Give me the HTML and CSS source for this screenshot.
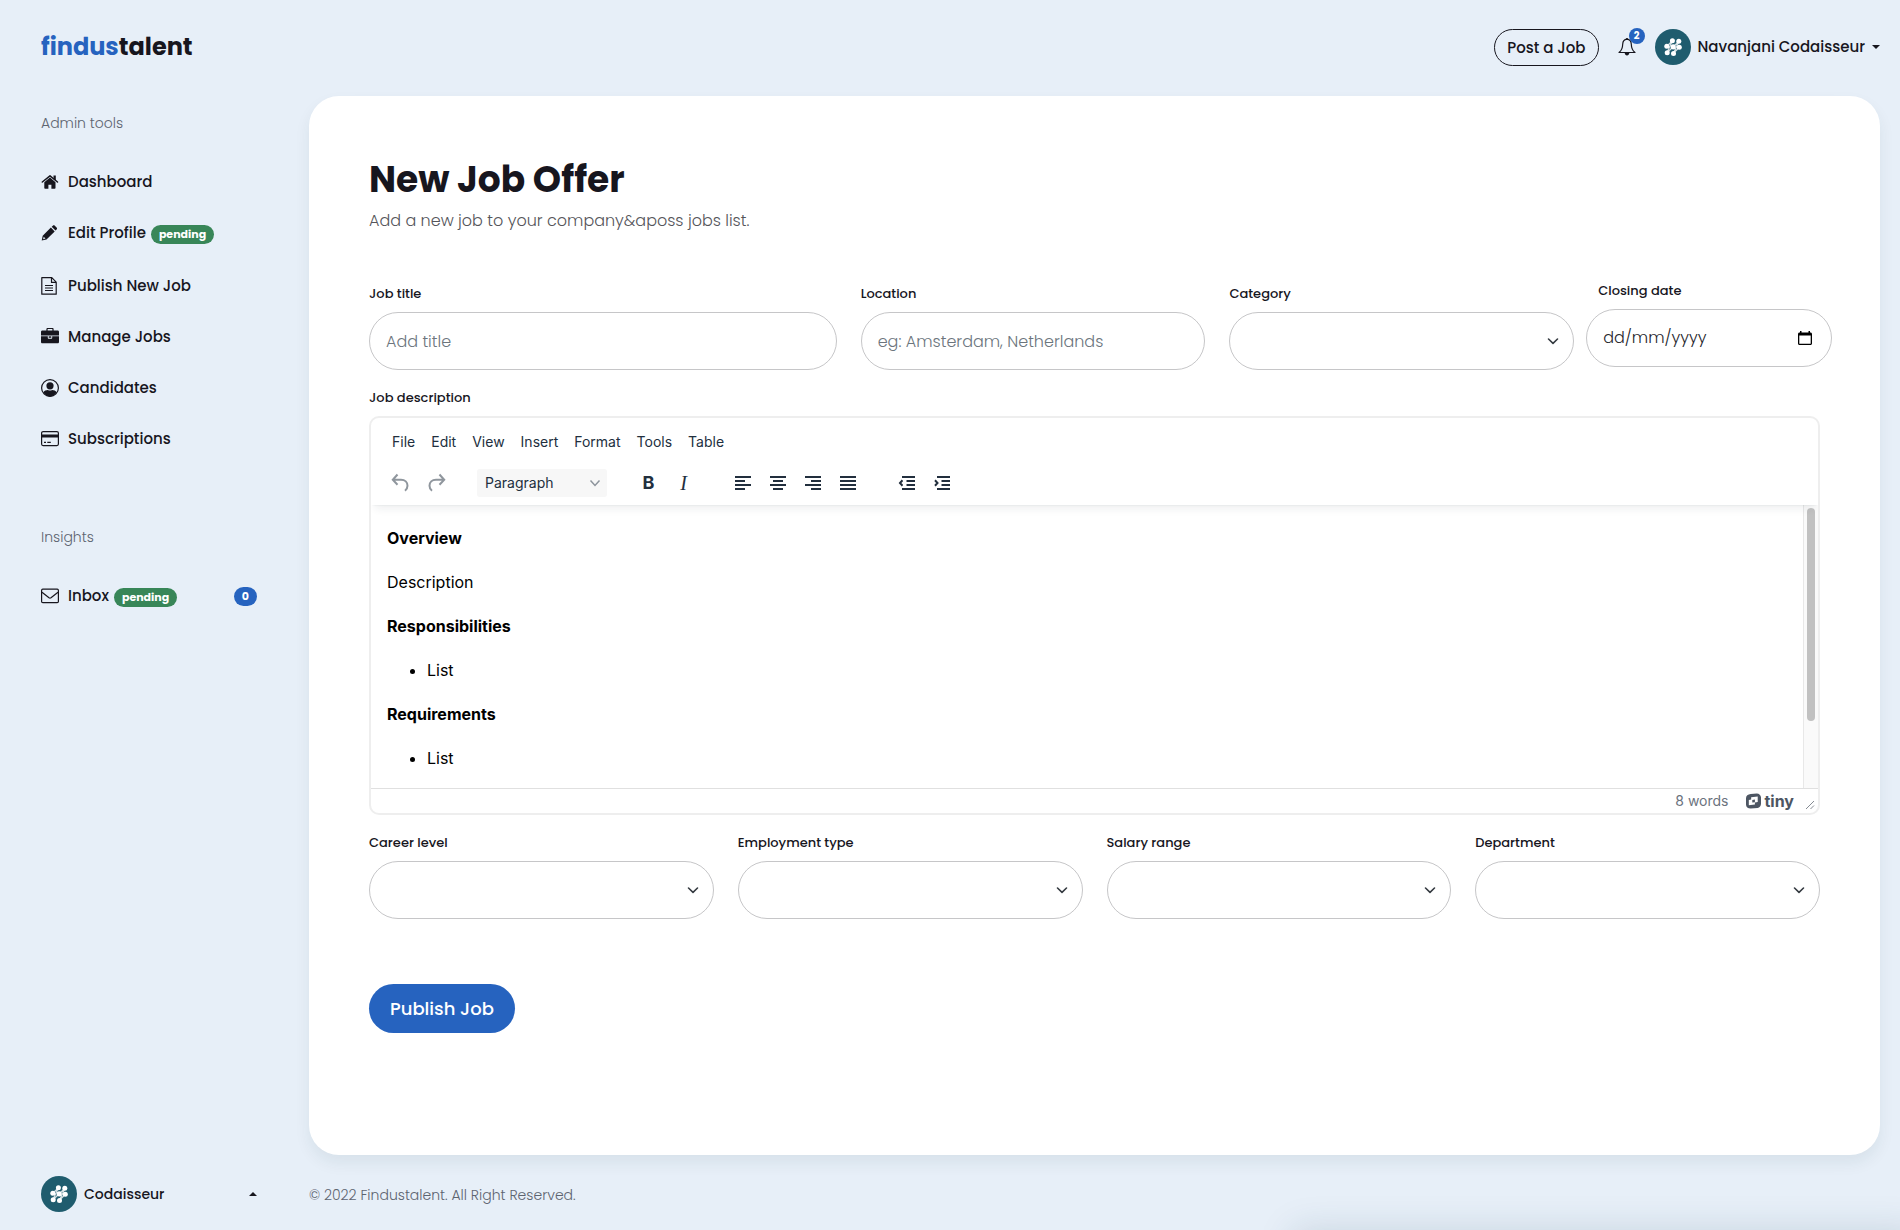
FILE: index.html
```html
<!DOCTYPE html>
<html lang="en-GB">
<head>
<meta charset="utf-8">
<meta name="viewport" content="width=device-width, initial-scale=1">
<title>New Job Offer - findustalent</title>
<link rel="stylesheet" href="styles.css">
</head>
<body>
<svg class="sprite" aria-hidden="true">
  <symbol id="mark" viewBox="0 0 36 36">
    <circle cx="18" cy="18" r="18" fill="#1f5c6e"/>
    <g stroke="#fff" stroke-linecap="round" stroke-width="1.300" fill="none" opacity=".8">
      <path d="M17.400 11.700 12 17.200M24 12.300 12 23.700M24.200 18.200 18.500 24.300M17.400 11.700 12 23.700M24 12.300 18.500 24.300"/>
    </g>
    <g fill="#fff">
      <circle cx="17.400" cy="11.700" r="2.500"/><circle cx="23.800" cy="12.300" r="2.500"/>
      <circle cx="11.800" cy="17.200" r="2.500"/><circle cx="18.200" cy="17.800" r="2.600"/><circle cx="24.300" cy="18.200" r="2.500"/>
      <circle cx="12.200" cy="23.800" r="2.500"/><circle cx="18.500" cy="24.400" r="2.500"/>
    </g>
  </symbol>
</svg>

<aside class="sidebar">
  <a class="logo" href="#"><span class="logo-accent">findus</span>talent</a>
  <nav class="nav">
    <h2 class="nav-title">Admin tools</h2>
    <ul class="nav-list">
      <li><a class="nav-link" href="#">
        <svg class="nav-icon" viewBox="0 0 18 18"><path fill="currentColor" d="M9 4.600 3.300 9.300V15c0 .5.3.8.8.8h3.300v-4h3v4h3.300c.5 0 .8-.3.8-.8V9.300z"/><path fill="none" stroke="currentColor" stroke-width="1.500" stroke-linecap="round" stroke-linejoin="round" d="M1.300 9 9 2.800 16.500 9"/><path fill="currentColor" d="M12.500 2.500h2.300v5l-2.300-2z"/></svg>
        <span>Dashboard</span></a></li>
      <li><a class="nav-link nav-link-tagged" href="#">
        <svg class="nav-icon" viewBox="0 0 18 18"><path fill="currentColor" d="M11.800 1.700c.6-.6 1.400-.6 2 0l1.800 1.800c.6.6.6 1.400 0 2l-1.100 1.100-3.800-3.800zM9.900 3.600l3.800 3.800-8.200 8.200-4.800 1 1-4.800zM2.700 12.700l-.6 2.500 2.400-.6z" fill-rule="evenodd"/></svg>
        <span>Edit Profile</span><span class="tag">pending</span></a></li>
      <li><a class="nav-link" href="#">
        <svg class="nav-icon" viewBox="0 0 18 18"><g fill="none" stroke="currentColor" stroke-width="1.200" stroke-linejoin="round"><path d="M.8.700h10l4.400 4.400v12.100H.8zM10.500.700v4.700h4.700"/><path d="M4 8.500h8M4 11h8M4 13.500h8"/></g></svg>
        <span>Publish New Job</span></a></li>
      <li><a class="nav-link" href="#">
        <svg class="nav-icon" viewBox="0 0 18 18"><path fill="none" stroke="currentColor" stroke-width="1.200" d="M6 3V1.200c0-.5.3-.8.8-.8h4.400c.5 0 .8.300.8.8V3"/><path fill="currentColor" d="M1.300 2.600h15.400c.7 0 1.300.6 1.300 1.300v3.600H0V3.900c0-.7.6-1.300 1.300-1.300zM0 8.300h6.800V10c0 .4.300.7.7.7h3c.4 0 .7-.3.700-.7V8.300H18V14c0 .7-.6 1.300-1.300 1.300H1.300C.6 15.300 0 14.700 0 14z"/><path fill="currentColor" d="M7.700 8.300h2.600v1.500H7.700z"/></svg>
        <span>Manage Jobs</span></a></li>
      <li><a class="nav-link" href="#">
        <svg class="nav-icon" viewBox="0 0 18 18"><circle cx="9" cy="9" r="8.400" fill="none" stroke="currentColor" stroke-width="1.200"/><circle cx="9" cy="6.800" r="3.600" fill="currentColor"/><path fill="currentColor" d="M2.300 13.500c1-1.600 2.800-2.400 4.600-2.400.7.400 1.400.5 2.100.5s1.400-.1 2.100-.5c1.800 0 3.600.8 4.600 2.400C14.200 15.900 11.800 17.400 9 17.400s-5.200-1.500-6.700-3.900z"/></svg>
        <span>Candidates</span></a></li>
      <li><a class="nav-link" href="#">
        <svg class="nav-icon" viewBox="0 0 18 18"><rect x=".6" y="1.600" width="16.800" height="14" rx="1.500" fill="none" stroke="currentColor" stroke-width="1.200"/><path fill="currentColor" d="M.6 4.600h16.800v3H.6zM3 11.800h2v1.300H3zM6.300 11.800h3.500v1.300H6.300z"/></svg>
        <span>Subscriptions</span></a></li>
    </ul>
    <h2 class="nav-title nav-title-second">Insights</h2>
    <ul class="nav-list">
      <li><a class="nav-link nav-link-tagged" href="#">
        <svg class="nav-icon" viewBox="0 0 18 18"><rect x=".6" y="2.200" width="16.800" height="13.500" rx="1.200" fill="none" stroke="currentColor" stroke-width="1.200"/><path fill="none" stroke="currentColor" stroke-width="1.200" d="M1 5.200 8 10.700c.7.500 1.300.5 2 0l7-5.500"/></svg>
        <span>Inbox</span><span class="tag">pending</span><span class="tag tag-count">0</span></a></li>
    </ul>
  </nav>
  <button class="company" type="button">
    <svg class="avatar" aria-hidden="true"><use href="#mark"/></svg>
    <span>Codaisseur</span>
    <span class="caret caret-up"></span>
  </button>
</aside>

<div class="page">
  <header class="topbar">
    <a class="post-job" href="#">Post a Job</a>
    <button class="bell" type="button" aria-label="Notifications">
      <svg class="bell-icon" viewBox="0 0 18 18"><path fill="none" stroke="currentColor" stroke-width="1.200" stroke-linejoin="round" d="M9 1.200c-2.800.3-4.200 2.400-4.300 5-.1 3.600-1 6.200-3.700 8.300h16c-2.700-2.100-3.600-4.700-3.700-8.300-.1-2.600-1.500-4.700-4.300-5z"/><path fill="currentColor" d="M9 0c.6 0 1 .5 1 1.200H8C8 .5 8.400 0 9 0zM6.700 15h4.600c-.2 1.500-1 2.500-2.300 2.500S6.900 16.500 6.700 15z"/></svg>
      <span class="bell-count">2</span>
    </button>
    <button class="user" type="button">
      <svg class="avatar" aria-hidden="true"><use href="#mark"/></svg>
      <span>Navanjani Codaisseur</span>
      <span class="caret"></span>
    </button>
  </header>

  <main class="card">
    <h1 class="title">New Job Offer</h1>
    <p class="lead">Add a new job to your company&amp;aposs jobs list.</p>
    <form class="form">
      <div class="row row-top">
        <div class="field field-wide"><label for="title">Job title</label><input class="control" id="title" type="text" placeholder="Add title"></div>
        <div class="field"><label for="location">Location</label><input class="control" id="location" type="text" placeholder="eg: Amsterdam, Netherlands"></div>
        <div class="field"><label for="category">Category</label><select class="control select" id="category"><option></option></select></div>
        <div class="field field-date">
          <label for="closing">Closing date</label>
          <div class="control date">
            <input class="date-input" id="closing" type="text" placeholder="dd/mm/yyyy">
            <button class="date-button" type="button" aria-label="Open calendar"><svg class="date-icon" viewBox="0 0 14 16"><path fill="currentColor" fill-rule="evenodd" d="M2 1h1.500v1.500h7V1H12v1.500h.5c.8 0 1.500.6 1.500 1.500v9.500c0 .8-.7 1.500-1.500 1.500h-11C.7 15 0 14.300 0 13.500V4c0-.9.700-1.500 1.500-1.500H2zM1.300 5.500v8.200h11.400V5.500z"/></svg></button>
          </div>
        </div>
      </div>

      <div class="description">
        <label for="editor-body">Job description</label>
        <div class="editor">
          <div class="editor-head">
            <div class="menubar">
              <button type="button">File</button><button type="button">Edit</button><button type="button">View</button><button type="button">Insert</button><button type="button">Format</button><button type="button">Tools</button><button type="button">Table</button>
            </div>
            <div class="toolbar">
              <div class="group">
                <button class="tool tool-off" type="button" aria-label="Undo"><svg viewBox="0 0 24 24"><path d="M8.500 3.500 3.800 8.800l4.700 4.900M4 8.800h8c4 0 6.500 2.400 6.500 6 0 2-.9 3.800-2.500 5"/></svg></button>
                <button class="tool tool-off" type="button" aria-label="Redo"><svg viewBox="0 0 24 24"><path d="m15.500 3.500 4.700 5.300-4.700 4.900M20 8.800h-8c-4 0-6.500 2.400-6.500 6 0 2 .9 3.800 2.500 5"/></svg></button>
              </div>
              <select class="block-format" aria-label="Block format"><option>Paragraph</option></select>
              <div class="group">
                <button class="tool tool-bold" type="button" aria-label="Bold">B</button>
                <button class="tool tool-italic" type="button" aria-label="Italic">I</button>
              </div>
              <div class="group">
                <button class="tool" type="button" aria-label="Align left"><svg viewBox="0 0 24 24"><path d="M4 6h16M4 10h10M4 14h16M4 18h10"/></svg></button>
                <button class="tool" type="button" aria-label="Align centre"><svg viewBox="0 0 24 24"><path d="M4 6h16M7 10h10M4 14h16M7 18h10"/></svg></button>
                <button class="tool" type="button" aria-label="Align right"><svg viewBox="0 0 24 24"><path d="M4 6h16M10 10h10M4 14h16M10 18h10"/></svg></button>
                <button class="tool" type="button" aria-label="Justify"><svg viewBox="0 0 24 24"><path d="M4 6h16M4 10h16M4 14h16M4 18h16"/></svg></button>
              </div>
              <div class="group">
                <button class="tool" type="button" aria-label="Outdent"><svg viewBox="0 0 24 24"><path d="M7 6h13M11.500 10H20M11.500 14H20M7 18h13M7.500 9.300 5 12l2.500 2.700"/></svg></button>
                <button class="tool" type="button" aria-label="Indent"><svg viewBox="0 0 24 24"><path d="M7 6h13M11.500 10H20M11.500 14H20M7 18h13M5 9.300 7.500 12 5 14.700"/></svg></button>
              </div>
            </div>
          </div>
          <div class="editor-main">
            <div class="editor-body" id="editor-body" contenteditable="true" role="textbox" aria-label="Job description">
              <p><strong>Overview</strong></p>
              <p>Description</p>
              <p><strong>Responsibilities</strong></p>
              <ul><li>List</li></ul>
              <p><strong>Requirements</strong></p>
              <ul><li>List</li></ul>
            </div>
            <div class="scrollbar"><div class="scrollbar-thumb"></div></div>
          </div>
          <div class="statusbar">
            <span>8 words</span>
            <a class="tiny" href="#"><svg class="tiny-icon" viewBox="0 0 16 16"><path fill="currentColor" fill-rule="evenodd" d="M5 .6 11.500 0C14 0 16 1.800 16 4.300V11c0 2.300-1.400 4-3.600 4.400L5 16c-3 0-5-1.600-5-4.300V5C0 2.500 2 .800 5 .6zM5.500 4v2.300L3 6.800v5.800l6.500-.8V9.500l3-.5V3.200zm1.200 2.900 2.800-.4v2.700l-2.800.4z"/></svg>tiny</a>
            <svg class="grip" viewBox="0 0 10 10"><path d="M1 9 9 1M5.500 9 9 5.500"/></svg>
          </div>
        </div>
      </div>

      <div class="row">
        <div class="field"><label for="career">Career level</label><select class="control select" id="career"><option></option></select></div>
        <div class="field"><label for="employment">Employment type</label><select class="control select" id="employment"><option></option></select></div>
        <div class="field"><label for="salary">Salary range</label><select class="control select" id="salary"><option></option></select></div>
        <div class="field"><label for="department">Department</label><select class="control select" id="department"><option></option></select></div>
      </div>
      <button class="publish" type="submit">Publish Job</button>
    </form>
  </main>
  <footer class="footer">© 2022 Findustalent. All Right Reserved.</footer>
</div>
</body>
</html>
```
FILE: styles.css
```css
*, *::before, *::after { box-sizing: border-box; }

body {
  margin: 0;
  display: flex;
  min-height: 100vh;
  background: #e7eff8;
  color: #17161e;
  font: 500 15px/24px Poppins, Inter, "Open Sans", sans-serif;
  overflow-x: hidden;
}

body::after {
  content: "";
  position: fixed;
  top: 100%;
  right: -20px;
  width: 33%;
  height: 60px;
  box-shadow: 0 0 36px rgba(30, 70, 90, .15);
}

button, input, select { font: inherit; color: inherit; }
button { border: 0; padding: 0; background: none; cursor: pointer; }
a { color: inherit; text-decoration: none; }
.sprite { position: absolute; width: 0; height: 0; }
.avatar { width: 36px; height: 36px; flex: none; }

.sidebar {
  flex: none;
  width: 309px;
  padding: 28px 52px 18px 41px;
  display: flex;
  flex-direction: column;
}
.logo { font-size: 24px; line-height: 38px; font-weight: 700; }
.logo-accent { color: #2663bf; }
.nav { flex: 1; padding-top: 45px; }
.nav-title { margin: 0 0 35px; font-size: 14px; line-height: 24px; font-weight: 300; color: #5d6470; }
.nav-title-second { margin-top: 74px; }
.nav-list { margin: 0; padding: 0; list-style: none; display: grid; gap: 27px; }
.nav-link { display: flex; align-items: center; line-height: 24px; }
.nav-link-tagged { padding-bottom: 2px; }
.nav-icon { width: 18px; height: 18px; margin-right: 9px; flex: none; }
.tag {
  margin: 3px 0 0 5px;
  padding: 0 8px;
  border-radius: 10px;
  background: #388658;
  color: #fff;
  font-size: 11px;
  line-height: 19px;
  font-weight: 700;
}
.tag-count { margin: 1px 0 0 auto; background: #2663bf; }
.company { display: flex; align-items: center; gap: 7px; font-size: 14px; }
.caret { border: 4px solid transparent; border-top-color: currentColor; border-bottom: 0; }
.caret-up { margin-left: auto; border: 4px solid transparent; border-bottom-color: currentColor; border-top: 0; }

.page { flex: 1; min-width: 0; padding-right: 20px; display: flex; flex-direction: column; }
.topbar { height: 96px; padding-bottom: 2px; display: flex; justify-content: flex-end; align-items: center; }
.post-job { padding: 0 12px; border: 1px solid #17161e; border-radius: 19px; line-height: 35px; }
.bell { position: relative; width: 18px; height: 18px; margin: 0 19px; }
.bell-icon { display: block; width: 18px; height: 18px; }
.bell-count {
  position: absolute;
  left: 11px;
  top: -10px;
  width: 16px;
  border-radius: 8px;
  background: #2663bf;
  color: #fff;
  font-size: 10px;
  line-height: 16px;
  font-weight: 700;
}
.user { display: flex; align-items: center; gap: 7px; }

.card {
  flex: 1;
  padding: 60px;
  border-radius: 30px;
  background: #fff;
  box-shadow: 0 8px 16px rgba(0, 50, 60, .07);
}
.title { margin: 0; font-size: 36px; line-height: 48px; font-weight: 700; }
.lead { margin: 5px 0 0; font-size: 16px; font-weight: 300; color: #55555a; }
.form { padding-top: 48px; display: grid; gap: 18px; }
label { display: block; margin-bottom: 8px; font-size: 13px; line-height: 20px; }
.row { display: grid; grid-template-columns: repeat(12, 1fr); gap: 24px; }
.row-top .field { padding-top: 3px; }
.field { grid-column: span 3; min-width: 0; }
.field-wide { grid-column: span 4; }
.row-top .field-date { grid-column: span 2; margin: 0 -12px; padding-top: 0; }
.field-date label { padding-left: 12px; }
.control {
  display: block;
  width: 100%;
  height: 58px;
  padding: 0 16px;
  border: 1px solid #c6c6c8;
  border-radius: 29px;
  background: #fff;
  font-size: 16px;
  font-weight: 300;
}
.control::placeholder { color: #6c757d; opacity: 1; }
.select {
  appearance: none;
  background: #fff url("data:image/svg+xml,%3Csvg xmlns='http://www.w3.org/2000/svg' viewBox='0 0 12 12'%3E%3Cpath d='M1.500 4 6 8.300 10.500 4' fill='none' stroke='%23343a40' stroke-width='1.600' stroke-linecap='round' stroke-linejoin='round'/%3E%3C/svg%3E") no-repeat right 14px center / 12px 12px;
}
.date { display: flex; align-items: center; justify-content: space-between; padding-right: 19px; }
.date-input { flex: 1; min-width: 0; padding: 0; border: 0; background: none; }
.date-input::placeholder { color: #26262c; opacity: 1; }
.date-button, .date-icon { display: block; width: 14px; height: 16px; color: #000; }

.editor, .editor button, .editor select { font-family: Inter, "Open Sans", sans-serif; }
.editor { border: 2px solid #eee; border-radius: 10px; overflow: hidden; color: #222f3e; }
.editor-head {
  position: relative;
  padding: 8px 12px 3px;
  box-shadow: 0 2px 2px -2px rgba(34, 47, 62, .1), 0 8px 8px -4px rgba(34, 47, 62, .07);
}
.menubar { display: flex; gap: 16px; padding: 0 9px; font-size: 14px; line-height: 32px; font-weight: 400; }
.menubar button { line-height: 32px; }
.toolbar { display: flex; align-items: center; gap: 24px; height: 38px; margin-top: 6px; }
.group { display: flex; }
.tool { width: 35px; height: 28px; display: flex; align-items: center; justify-content: center; font-size: 20px; line-height: 28px; }
.tool svg { width: 24px; height: 24px; fill: none; stroke: currentColor; stroke-width: 2; }
.tool-off { opacity: .5; }
.tool-bold { font-weight: 700; font-size: 18px; }
.editor .tool-italic { font-family: "Liberation Serif", serif; font-style: italic; }
.block-format {
  appearance: none;
  width: 130px;
  height: 28px;
  padding: 0 8px;
  border: 0;
  border-radius: 3px;
  background: #f7f7f7 url("data:image/svg+xml,%3Csvg xmlns='http://www.w3.org/2000/svg' viewBox='0 0 12 12'%3E%3Cpath d='M1.500 3.500 6 8.500 10.500 3.500' fill='none' stroke='%238d949c' stroke-width='1.500'/%3E%3C/svg%3E") no-repeat right 6px center / 12px 12px;
  font-size: 14px;
  font-weight: 400;
}
.editor-main { display: flex; height: 283px; }
.editor-body { flex: 1; padding: 22px 16px 0; outline: 0; color: #000; font-size: 16px; line-height: 22px; font-weight: 400; }
.editor-body p { margin: 0 0 22px; }
.editor-body ul { margin: 0 0 22px; padding-left: 40px; }
.scrollbar { width: 15px; padding: 3px; border-left: 1px solid #e8e8e8; background: #fafafa; }
.scrollbar-thumb { width: 8px; height: 213px; border-radius: 4px; background: #c1c1c1; }
.statusbar {
  height: 25px;
  padding: 0 3px;
  border-top: 1px solid #e0e0e0;
  display: flex;
  justify-content: flex-end;
  align-items: center;
  font-size: 14px;
  font-weight: 400;
  color: #6b737e;
}
.tiny { display: flex; align-items: center; gap: 3px; margin: 0 11px 0 18px; font-size: 16px; font-weight: 700; color: #4d5663; }
.tiny-icon { width: 15px; height: 16px; }
.grip { width: 10px; height: 10px; align-self: flex-end; margin-bottom: 3px; fill: none; stroke: #858b93; stroke-width: 1; }

.publish {
  justify-self: start;
  margin-top: 47px;
  padding: 0 21px;
  border-radius: 25px;
  background: #2663bf;
  color: #fff;
  font-size: 18px;
  line-height: 49px;
}
.footer { padding: 28px 0 23px; font-size: 14px; font-weight: 300; color: #5d6470; }
```
